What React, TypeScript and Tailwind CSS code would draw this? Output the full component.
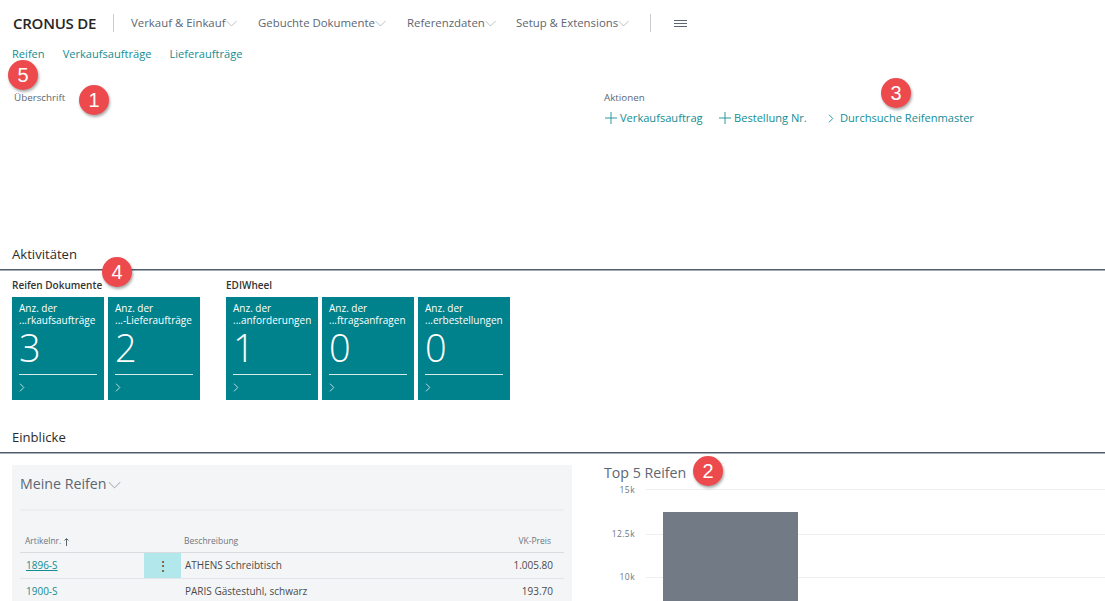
import React from "react";

const font = { fontFamily: '"Open Sans","Noto Sans",sans-serif' };

function Chevron({ className = "" }: { className?: string }) {
  return (
    <svg width="11" height="7" viewBox="0 0 11 7" fill="none" className={className}>
      <path d="M0.5 1 L5.5 6 L10.5 1" stroke="#b4bac1" strokeWidth="0.9" />
    </svg>
  );
}

function Right({ color = "#b9dfe2" }: { color?: string }) {
  return (
    <svg width="6" height="9" viewBox="0 0 6 9" fill="none">
      <path d="M1 0.7 L4.8 4.5 L1 8.3" stroke={color} strokeWidth="1" />
    </svg>
  );
}

function Plus() {
  return (
    <svg width="12" height="12" viewBox="0 0 12 12" fill="none">
      <path d="M6 0 V12 M0 6 H12" stroke="#2a9a9f" strokeWidth="1" />
    </svg>
  );
}

function Badge({ n, className }: { n: string; className: string }) {
  return (
    <div
      className={`absolute w-[30px] h-[30px] rounded-full bg-[#ec4a4d] text-white text-[20px] flex items-center justify-center shadow-[1px_2px_3px_rgba(0,0,0,0.35)] ${className}`}
      style={{ fontFamily: '"Liberation Sans",sans-serif' }}
    >
      {n}
    </div>
  );
}

function Tile({ a, b, v }: { a: string; b: string; v: string }) {
  return (
    <div className="w-[91.5px] h-[103px] bg-[#00828c] text-white px-[7px] pt-[5px] flex flex-col">
      <div className="h-[24px] text-[10px] leading-[12px] font-medium whitespace-nowrap">
        <div>{a}</div>
        <div>{b}</div>
      </div>
      <div className="text-[38px] leading-[38px] font-light mt-[2px] h-[39px]">{v}</div>
      <div className="border-t border-[#d5eced] mt-[7px] pt-[8px] h-[20px] flex items-start">
        <Right />
      </div>
    </div>
  );
}

function Section({ title }: { title: string }) {
  return (
    <div className="border-b border-[#505c6d] shadow-[0_1px_0_#a9aeb6] h-[24px] pl-[12px]">
      <div className="text-[13.1px] leading-[17px] font-medium text-[#2b2b2b]">{title}</div>
    </div>
  );
}

function Menu({ label, className }: { label: string; className: string }) {
  return (
    <div className={`flex items-center whitespace-nowrap ${className}`}>
      <span>{label}</span>
      <Chevron className="mt-[2px]" />
    </div>
  );
}

export default function App() {
  return (
    <div className="relative h-[601px] w-[1105px] overflow-hidden bg-white text-[#333]" style={font}>
      {/* top nav */}
      <div className="h-[46px] flex items-center pl-[13px]">
        <div className="text-[15px] font-semibold text-[#262626] w-[100px] tracking-[-0.25px]">CRONUS DE</div>
        <div className="w-px h-[18px] bg-[#c8cbd0]" />
        <div className="flex items-center text-[11.4px] text-[#5c6672] ml-[17px]">
          <Menu label="Verkauf & Einkauf" className="w-[127px]" />
          <Menu label="Gebuchte Dokumente" className="w-[149px]" />
          <Menu label="Referenzdaten" className="w-[109px]" />
          <Menu label="Setup & Extensions" className="w-[134px]" />
        </div>
        <div className="w-px h-[18px] bg-[#c8cbd0]" />
        <div className="ml-[23px] flex flex-col gap-[2px]">
          <div className="w-[13px] h-px bg-[#5c6672]" />
          <div className="w-[13px] h-px bg-[#5c6672]" />
          <div className="w-[13px] h-px bg-[#5c6672]" />
        </div>
      </div>

      {/* sub nav */}
      <div className="h-[17px] flex items-center pl-[12px] gap-[18px] text-[11.1px] text-[#138d93]">
        <span>Reifen</span>
        <span>Verkaufsaufträge</span>
        <span>Lieferaufträge</span>
      </div>

      {/* headline + actions */}
      <div className="h-[183px] flex pt-[28px]">
        <div className="w-[604px] pl-[14px] text-[9.8px] leading-[14px] text-[#5c6672]">Überschrift</div>
        <div>
          <div className="text-[9.8px] leading-[14px] text-[#5c6672]">Aktionen</div>
          <div className="flex items-center text-[11.1px] text-[#138d93] mt-[5px] leading-[16px]">
            <div className="flex items-center gap-[3px] w-[115px] pl-[1px]"><Plus /><span>Verkaufsauftrag</span></div>
            <div className="flex items-center gap-[3px] w-[108px]"><Plus /><span>Bestellung Nr.</span></div>
            <div className="flex items-center gap-[6px] ml-[1px]"><Right color="#2a9a9f" /><span>Durchsuche Reifenmaster</span></div>
          </div>
        </div>
      </div>

      {/* activities */}
      <Section title="Aktivitäten" />
      <div className="flex pl-[12px] pt-[8px]">
        <div className="w-[214px]">
          <div className="text-[10px] leading-[14px] font-semibold text-[#333] mb-[5px] whitespace-nowrap">Reifen Dokumente</div>
          <div className="flex gap-[4.5px]">
            <Tile a="Anz. der" b="...rkaufsaufträge" v="3" />
            <Tile a="Anz. der" b="...-Lieferaufträge" v="2" />
          </div>
        </div>
        <div>
          <div className="text-[10px] leading-[14px] font-semibold text-[#333] mb-[5px]">EDIWheel</div>
          <div className="flex gap-[4.5px]">
            <Tile a="Anz. der" b="...anforderungen" v="1" />
            <Tile a="Anz. der" b="...ftragsanfragen" v="0" />
            <Tile a="Anz. der" b="...erbestellungen" v="0" />
          </div>
        </div>
      </div>

      {/* insights */}
      <div className="mt-[29px]"><Section title="Einblicke" /></div>
      <div className="flex pt-[12px] pl-[12px]">
        <div className="w-[560px] h-[140px] bg-[#f4f5f7] px-[8px] shrink-0">
          <div className="h-[46px] border-b-2 border-[#eceef0] flex items-center gap-[2px] pb-[7px] text-[#5c6672] text-[14.2px]">
            <span>Meine Reifen</span>
            <Chevron className="mt-[3px] w-[13px] h-[8px]" />
          </div>
          <div className="flex items-end h-[42px] pb-[4px] text-[8.5px] text-[#6c7580] border-b border-[#d9dbde] pl-[5px]">
            <div className="w-[159px] flex items-center gap-[3px]">
              Artikelnr.
              <svg width="5" height="8" viewBox="0 0 5 8" fill="none">
                <path d="M2.5 8 V1 M0.5 2.5 L2.5 0.5 L4.5 2.5" stroke="#4b5560" strokeWidth="0.9" />
              </svg>
            </div>
            <div>Beschreibung</div>
            <div className="ml-auto pr-[13px]">VK-Preis</div>
          </div>
          <div className="flex items-center h-[26px] text-[10px] border-b border-[#e2e4e7] text-[#4a4a4a]">
            <div className="w-[124px] pl-[6px] text-[#138d93] underline">1896-S</div>
            <div className="w-[37px] h-full bg-[#b2e8ec] flex items-center justify-center text-[#333] text-[12px]">⋮</div>
            <div className="pl-[4px]">ATHENS Schreibtisch</div>
            <div className="ml-auto pr-[11px]">1.005.80</div>
          </div>
          <div className="flex items-center h-[24px] text-[10px] text-[#4a4a4a]">
            <div className="w-[124px] pl-[6px] text-[#138d93]">1900-S</div>
            <div className="w-[37px]" />
            <div className="pl-[4px]">PARIS Gästestuhl, schwarz</div>
            <div className="ml-auto pr-[11px]">193.70</div>
          </div>
        </div>
        <div className="ml-[32px] flex-1 mt-[-1px]">
          <div className="text-[14.2px] leading-[18px] text-[#5c6672]">Top 5 Reifen</div>
          <svg width="501" height="130" viewBox="0 0 501 130" className="block">
            <g stroke="#eceef0" strokeWidth="1">
              <line x1="42" x2="501" y1="7.5" y2="7.5" />
              <line x1="42" x2="501" y1="52.5" y2="52.5" />
              <line x1="42" x2="501" y1="95.5" y2="95.5" />
            </g>
            <g fill="#6c7580" fontSize="8.5" textAnchor="end" letterSpacing="0.4" fontFamily="Open Sans, sans-serif">
              <text x="31" y="11">15k</text>
              <text x="31" y="55">12.5k</text>
              <text x="31" y="98">10k</text>
            </g>
            <rect x="59" y="30" width="135" height="100" fill="#717a85" />
          </svg>
        </div>
      </div>

      <Badge n="5" className="left-[8px] top-[60px]" />
      <Badge n="1" className="left-[79px] top-[85px]" />
      <Badge n="3" className="left-[881px] top-[78px]" />
      <Badge n="4" className="left-[102px] top-[257px]" />
      <Badge n="2" className="left-[693px] top-[456px]" />
    </div>
  );
}
